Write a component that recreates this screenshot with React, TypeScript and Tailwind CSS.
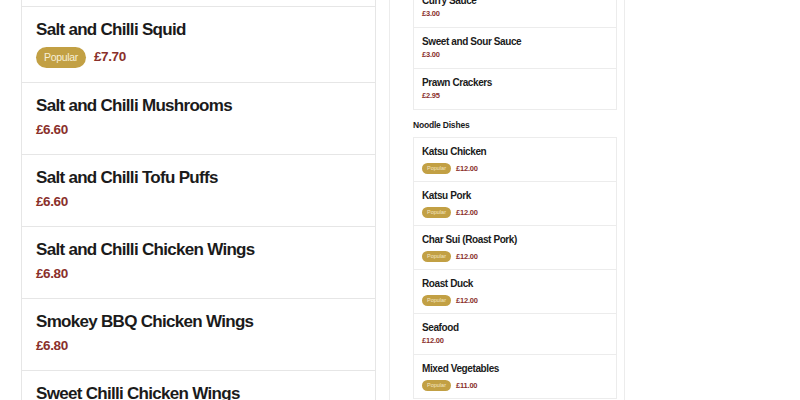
import React from 'react';

type Item = { name: string; price: string; popular?: boolean };

const mainItems: Item[] = [
  { name: 'Salt and Chilli Squid', price: '£7.70', popular: true },
  { name: 'Salt and Chilli Mushrooms', price: '£6.60' },
  { name: 'Salt and Chilli Tofu Puffs', price: '£6.60' },
  { name: 'Salt and Chilli Chicken Wings', price: '£6.80' },
  { name: 'Smokey BBQ Chicken Wings', price: '£6.80' },
  { name: 'Sweet Chilli Chicken Wings', price: '£6.80' },
];

const sauces: Item[] = [
  { name: 'Curry Sauce', price: '£3.00' },
  { name: 'Sweet and Sour Sauce', price: '£3.00' },
  { name: 'Prawn Crackers', price: '£2.95' },
];

const noodles: Item[] = [
  { name: 'Katsu Chicken', price: '£12.00', popular: true },
  { name: 'Katsu Pork', price: '£12.00', popular: true },
  { name: 'Char Sui (Roast Pork)', price: '£12.00', popular: true },
  { name: 'Roast Duck', price: '£12.00', popular: true },
  { name: 'Seafood', price: '£12.00' },
  { name: 'Mixed Vegetables', price: '£11.00', popular: true },
];

function BigRow({ item }: { item: Item }) {
  return (
    <div className="border-t border-[#e6e6e6] px-[14px] pt-[12px] pb-[14px]">
      <h3 className="h-[22px] text-[17px] leading-[22px] font-bold tracking-[-0.7px] text-[#1b1b1b]">{item.name}</h3>
      {item.popular ? (
        <div className="mt-[6px] flex h-[21px] items-center gap-[8px]">
          <span className="flex h-[21px] w-[50px] items-center justify-center rounded-full bg-[#c2a044] text-[10.5px] tracking-[-0.3px] text-[#f7efd6]">
            Popular
          </span>
          <span className="text-[13.5px] font-bold tracking-[-0.4px] text-[#8a302b]">{item.price}</span>
        </div>
      ) : (
        <div className="mt-[4px] mb-px h-[18px] text-[13.5px] leading-[18px] font-bold tracking-[-0.4px] text-[#8a302b]">
          {item.price}
        </div>
      )}
    </div>
  );
}

function SmallRow({ item }: { item: Item }) {
  return (
    <div className="border-t border-[#ececec] pl-[8px] pr-2 pt-[8px] pb-[7px] first:border-t-0">
      <h4 className="h-[12px] text-[10px] leading-[12px] font-bold tracking-[-0.4px] text-[#1b1b1b]">{item.name}</h4>
      {item.popular ? (
        <div className="mt-[5px] flex h-[11px] items-center gap-[5px]">
          <span className="flex h-[11px] w-[29px] items-center justify-center rounded-full bg-[#c2a044] text-[5.5px] text-[#f3e7c4]">
            Popular
          </span>
          <span className="text-[7.5px] font-bold tracking-[-0.2px] text-[#8a302b]">{item.price}</span>
        </div>
      ) : (
        <div className="mt-[2px] mb-px h-[10px] text-[7.5px] leading-[10px] font-bold tracking-[-0.2px] text-[#8a302b]">
          {item.price}
        </div>
      )}
    </div>
  );
}

function SmallCard({ items }: { items: Item[] }) {
  return (
    <div className="border border-[#ececec] bg-white">
      {items.map((it) => (
        <SmallRow key={it.name} item={it} />
      ))}
    </div>
  );
}

export default function App() {
  return (
    <div
      className="flex h-[400px] w-[800px] overflow-hidden bg-white pl-[21px]"
      style={{ fontFamily: '"Liberation Sans", Arial, sans-serif' }}
    >
      {/* main list */}
      <div className="w-[355px] shrink-0 border-x border-[#e6e6e6] pt-[6px]">
        {mainItems.map((it) => (
          <BigRow key={it.name} item={it} />
        ))}
      </div>

      {/* side column */}
      <div className="ml-[13px] w-[236px] shrink-0 border-x border-[#ececec] pl-[23px] pr-[7px]">
        <div className="-mt-[14px]">
          <SmallCard items={sauces} />
          <h2 className="mt-[9px] mb-[6px] h-[12px] text-[8.5px] leading-[12px] font-bold tracking-[-0.2px] text-[#1b1b1b]">
            Noodle Dishes
          </h2>
          <SmallCard items={noodles} />
        </div>
      </div>
    </div>
  );
}
